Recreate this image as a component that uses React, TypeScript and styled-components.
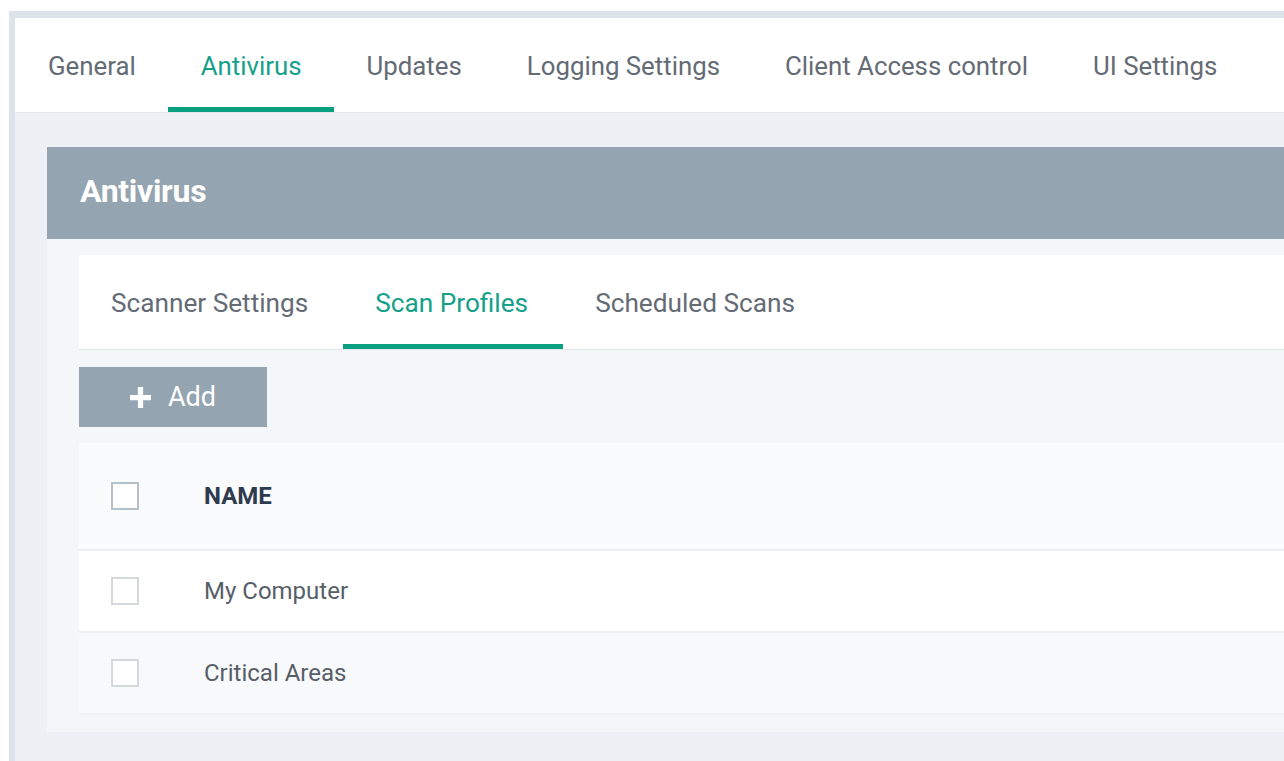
import { FC, useState } from 'react'
import styled, { createGlobalStyle } from 'styled-components'

const GlobalStyle = createGlobalStyle`
	html, body {
		margin: 0;
		padding: 0;
		background: #ffffff;
		overflow: hidden;
	}
	body {
		font-family: Roboto, 'Liberation Sans', Arial, sans-serif;
	}
`

const TOP_TABS = ['General', 'Antivirus', 'Updates', 'Logging Settings', 'Client Access control', 'UI Settings']
const SUB_TABS = ['Scanner Settings', 'Scan Profiles', 'Scheduled Scans']
const PROFILES = ['My Computer', 'Critical Areas']

const App: FC = () => {
	const [topTab, setTopTab] = useState('Antivirus')
	const [subTab, setSubTab] = useState('Scan Profiles')
	const [checked, setChecked] = useState<Record<string, boolean>>({})

	const allChecked = PROFILES.every((p) => checked[p])

	const toggleAll = () => {
		const next: Record<string, boolean> = {}
		for (const p of PROFILES) next[p] = !allChecked
		setChecked(next)
	}

	return (
		<>
			<GlobalStyle />
			<Page>
				<Frame>
					<TabBar>
						{TOP_TABS.map((t) => (
							<Tab key={t} active={t === topTab} onClick={() => setTopTab(t)}>
								{t}
							</Tab>
						))}
					</TabBar>
					<Panel>
						<PanelHeader>Antivirus</PanelHeader>
						<PanelBody>
							<SubTabBar>
								{SUB_TABS.map((t) => (
									<SubTab key={t} active={t === subTab} onClick={() => setSubTab(t)}>
										{t}
									</SubTab>
								))}
							</SubTabBar>
							<AddButton>
								<PlusIcon viewBox="0 0 20 20">
									<path d="M7.5 0h5v7.5H20v5h-7.5V20h-5v-7.5H0v-5h7.5z" fill="#ffffff" />
								</PlusIcon>
								Add
							</AddButton>
							<Table>
								<HeadRow>
									<CheckCell>
										<CheckBox strong checked={allChecked} onClick={toggleAll} />
									</CheckCell>
									<HeadLabel>NAME</HeadLabel>
								</HeadRow>
								{PROFILES.map((p, i) => (
									<Row key={p} striped={i % 2 === 1}>
										<CheckCell>
											<CheckBox
												checked={!!checked[p]}
												onClick={() => setChecked({ ...checked, [p]: !checked[p] })}
											/>
										</CheckCell>
										<RowLabel>{p}</RowLabel>
									</Row>
								))}
							</Table>
						</PanelBody>
					</Panel>
				</Frame>
			</Page>
		</>
	)
}

const Page = styled.div`
	padding: 11px 0 0 9px;
	height: 761px;
	box-sizing: border-box;
	overflow: hidden;
`

const Frame = styled.div`
	width: 1320px;
	height: 100%;
	background: #edf1f5;
	border-top: 7px solid #dce3ea;
	border-left: 6px solid #dce3ea;
	box-sizing: border-box;
`

const TabBar = styled.div`
	display: flex;
	height: 95px;
	background: #ffffff;
	border-bottom: 1px solid #e3e8ec;
	box-sizing: border-box;
`

const Tab = styled.div<{ active?: boolean }>`
	display: flex;
	align-items: center;
	padding: 6px 32px 0 33px;
	font-size: 25.8px;
	color: ${({ active }) => (active ? '#14a08a' : '#646b75')};
	border-bottom: 5px solid ${({ active }) => (active ? '#08a080' : 'transparent')};
	cursor: pointer;
	white-space: nowrap;
`

const SubTab = styled(Tab)`
	padding: 6px 35px 0 32px;
	font-size: 26.2px;
`

const Panel = styled.div`
	margin: 34px 0 0 32px;
`

const PanelHeader = styled.div`
	display: flex;
	align-items: center;
	height: 92px;
	padding: 0 0 5px 33px;
	box-sizing: border-box;
	background: #94a4b0;
	color: #ffffff;
	font-size: 32px;
	font-weight: 700;
	letter-spacing: -0.3px;
`

const PanelBody = styled.div`
	background: #f4f7f9;
	padding: 16px 0 17px 32px;
`

const SubTabBar = styled(TabBar)`
	border-bottom-color: #e2e6ea;
`

const AddButton = styled.button`
	display: flex;
	align-items: center;
	gap: 17px;
	width: 188px;
	height: 60px;
	margin-top: 17px;
	padding: 0 0 0 51px;
	border: none;
	background: #94a4b0;
	color: #ffffff;
	font-family: Roboto, 'Liberation Sans', Arial, sans-serif;
	font-size: 27px;
	cursor: pointer;
`

const PlusIcon = styled.svg`
	width: 21px;
	height: 21px;
`

const Table = styled.div`
	margin-top: 16px;
`

const HeadRow = styled.div`
	display: flex;
	align-items: center;
	height: 108px;
	background: #fafbfc;
	border-bottom: 2px solid #edf0f2;
	box-sizing: border-box;
`

const Row = styled.div<{ striped?: boolean }>`
	display: flex;
	align-items: center;
	height: 82px;
	background: ${({ striped }) => (striped ? '#f7f9fb' : '#ffffff')};
	border-bottom: 2px solid #edf0f2;
	box-sizing: border-box;
`

const CheckCell = styled.div`
	width: 125px;
	padding-left: 32px;
	box-sizing: border-box;
`

const CheckBox = styled.div<{ strong?: boolean; checked?: boolean }>`
	width: 28px;
	height: 28px;
	box-sizing: border-box;
	border: 2px solid ${({ strong }) => (strong ? '#b6c0c8' : '#d6d9dc')};
	background: ${({ checked }) => (checked ? '#08a080' : '#ffffff')};
	cursor: pointer;
`

const HeadLabel = styled.div`
	font-size: 24px;
	font-weight: 700;
	color: #2e3a4e;
`

const RowLabel = styled.div`
	font-size: 24px;
	color: #575e68;
`

export default App
